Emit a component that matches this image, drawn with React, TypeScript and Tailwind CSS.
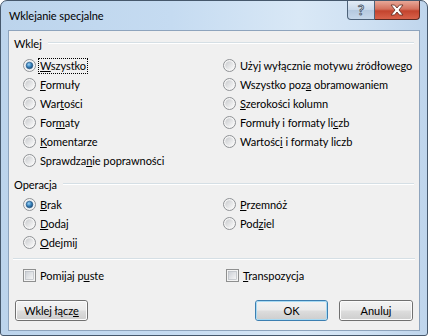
import React from 'react';

function Radio({ checked }: { checked?: boolean }) {
  return (
    <svg width="13" height="13" viewBox="0 0 13 13" className="shrink-0">
      <defs>
        <linearGradient id="rdIn" x1="0" y1="0" x2="1" y2="1">
          <stop offset="0" stopColor="#c9cbce" />
          <stop offset="1" stopColor="#fbfbfb" />
        </linearGradient>
        <radialGradient id="rdDot" cx="0.4" cy="0.35" r="0.7">
          <stop offset="0" stopColor="#9fd3f5" />
          <stop offset="0.5" stopColor="#3a86c0" />
          <stop offset="1" stopColor="#17446e" />
        </radialGradient>
      </defs>
      <circle cx="6.5" cy="6.5" r="6" fill="#f5f5f5" stroke="#8e9194" strokeWidth="1" />
      <circle cx="6.5" cy="6.5" r="4.3" fill="url(#rdIn)" />
      {checked && (
        <>
          <circle cx="6.5" cy="6.5" r="4.3" fill="#dfeaf4" />
          <circle cx="6.5" cy="6.5" r="3.3" fill="url(#rdDot)" stroke="#21527f" strokeWidth="0.6" />
        </>
      )}
    </svg>
  );
}

function Check() {
  return (
    <svg width="13" height="13" viewBox="0 0 13 13" className="shrink-0">
      <defs>
        <linearGradient id="cbIn" x1="0" y1="0" x2="1" y2="1">
          <stop offset="0" stopColor="#cbcfd5" />
          <stop offset="1" stopColor="#f7f7f7" />
        </linearGradient>
      </defs>
      <rect x="0.5" y="0.5" width="12" height="12" fill="#f4f4f4" stroke="#8e8f8f" />
      <rect x="2.5" y="2.5" width="8" height="8" fill="url(#cbIn)" stroke="#aeb3b9" strokeWidth="0.6" />
    </svg>
  );
}

function Option({
  kind = 'radio',
  checked,
  focus,
  children,
}: {
  kind?: 'radio' | 'check';
  checked?: boolean;
  focus?: boolean;
  children: React.ReactNode;
}) {
  return (
    <div className="h-[19px] flex items-center whitespace-nowrap">
      {kind === 'radio' ? <Radio checked={checked} /> : <Check />}
      <span
        className={`ml-[2px] px-[1px] h-[16px] flex items-center border ${
          focus ? 'border-dotted border-black' : 'border-transparent'
        }`}
      >
        {children}
      </span>
    </div>
  );
}

function GroupHeader({ label }: { label: string }) {
  return (
    <div className="h-[16px] flex items-center pl-[5px] pr-[5px]">
      <span>{label}</span>
      <div className="flex-1 ml-[6px] flex flex-col">
        <div className="h-px bg-[#d5dfe5]" />
        <div className="h-px bg-white" />
      </div>
    </div>
  );
}

function Btn({ children, primary, w }: { children: React.ReactNode; primary?: boolean; w: string }) {
  return (
    <button
      className={`${w} h-[21px] rounded-[3px] border ${
        primary ? 'border-[#3c7fb1]' : 'border-[#707070]'
      } p-0`}
    >
      <div
        className={`h-full w-full rounded-[2px] border ${
          primary ? 'border-[#a8daf3]' : 'border-[#fbfbfb]'
        } bg-[linear-gradient(#f2f2f2_0%,#ebebeb_48%,#dddddd_52%,#cfcfcf_100%)] flex items-center justify-center`}
      >
        {children}
      </div>
    </button>
  );
}

export default function App() {
  return (
    <div className="w-[428px] h-[336px] bg-white font-['Lato',sans-serif] text-[11px] tracking-[-0.05px] text-black leading-none">
      <div className="w-full h-full flex flex-col rounded-t-[7px] rounded-b-[3px] border border-[#46586c] bg-[linear-gradient(90deg,#bcd4ec_0%,#c5dbf1_40%,#d9e8f6_70%,#cfe1f3_85%,#bfd5ec_100%)]">
        <div className="h-[29px] flex items-start shrink-0">
          <div className="pl-[8px] pt-[9px] text-[11px]">Wklejanie specjalne</div>
          <div className="ml-auto mr-[7px] flex">
            <div className="w-[28px] h-[19px] rounded-bl-[4px] border border-t-0 border-[#4d6279] bg-[linear-gradient(#e3ecf6_0%,#c8d8ea_50%,#b5c9df_51%,#c6d7ea_100%)] flex items-center justify-center">
              <span className="text-[14px] font-bold text-white [-webkit-text-stroke:0.8px_#3b4c5e] leading-none">?</span>
            </div>
            <div className="w-[45px] h-[19px] rounded-br-[4px] border border-t-0 border-l-0 border-[#5a2a23] bg-[linear-gradient(#e8a898_0%,#d4715d_45%,#c3442e_55%,#d8624a_100%)] flex items-center justify-center">
              <svg width="16" height="12" viewBox="0 0 16 12">
                <path
                  d="M2 1 L5.5 1 L8 4 L10.5 1 L14 1 L10 6 L14 11 L10.5 11 L8 8 L5.5 11 L2 11 L6 6 Z"
                  fill="#ffffff"
                  stroke="#5b2820"
                  strokeWidth="0.8"
                  strokeLinejoin="round"
                />
              </svg>
            </div>
          </div>
        </div>

        <div className="mx-[7px] h-[301px] border border-[#8ea4bd] bg-[#f0f0f0] flex flex-col shrink-0">
          <div className="mt-[4px]">
            <GroupHeader label="Wklej" />
          </div>
          <div className="mt-[5px] pl-[14px] grid grid-cols-[200px_1fr]">
            <div className="flex flex-col">
              <Option checked focus>
                <span><u>W</u>szystko</span>
              </Option>
              <Option>
                <span><u>F</u>ormuły</span>
              </Option>
              <Option>
                <span>War<u>t</u>ości</span>
              </Option>
              <Option>
                <span>For<u>m</u>aty</span>
              </Option>
              <Option>
                <span><u>K</u>omentarze</span>
              </Option>
              <Option>
                <span>Sprawdza<u>n</u>ie poprawności</span>
              </Option>
            </div>
            <div className="flex flex-col">
              <Option>
                <span>Uży<u>j</u> wyłącznie motywu źródłowego</span>
              </Option>
              <Option>
                <span>Wszystko poz<u>a</u> obramowaniem</span>
              </Option>
              <Option>
                <span><u>S</u>zerokości kolumn</span>
              </Option>
              <Option>
                <span>Formuły i formaty li<u>c</u>zb</span>
              </Option>
              <Option>
                <span>Wartośc<u>i</u> i formaty liczb</span>
              </Option>
            </div>
          </div>

          <div className="mt-[6px]">
            <GroupHeader label="Operacja" />
          </div>
          <div className="mt-[3px] pl-[14px] grid grid-cols-[200px_1fr]">
            <div className="flex flex-col">
              <Option checked>
                <span><u>B</u>rak</span>
              </Option>
              <Option>
                <span><u>D</u>odaj</span>
              </Option>
              <Option>
                <span><u>O</u>dejmij</span>
              </Option>
            </div>
            <div className="flex flex-col">
              <Option>
                <span><u>P</u>rzemnóż</span>
              </Option>
              <Option>
                <span>Pod<u>z</u>iel</span>
              </Option>
            </div>
          </div>

          <div className="mt-[6px] mx-[4px] flex flex-col">
            <div className="h-px bg-[#d5dfe5]" />
            <div className="h-px bg-white" />
          </div>

          <div className="mt-[6px] pl-[14px] grid grid-cols-[203px_1fr]">
            <Option kind="check">
              <span>Pomijaj p<u>u</u>ste</span>
            </Option>
            <Option kind="check">
              <span><u>T</u>ranspozycja</span>
            </Option>
          </div>

          <div className="mt-[15px] px-[6px] flex items-center">
            <Btn w="w-[73px]">
              <span>Wklej łącz<u>e</u></span>
            </Btn>
            <div className="ml-auto flex gap-[11px]">
              <Btn w="w-[73px]" primary>
                <span>OK</span>
              </Btn>
              <Btn w="w-[74px]">
                <span>Anuluj</span>
              </Btn>
            </div>
          </div>
        </div>
      </div>
    </div>
  );
}
